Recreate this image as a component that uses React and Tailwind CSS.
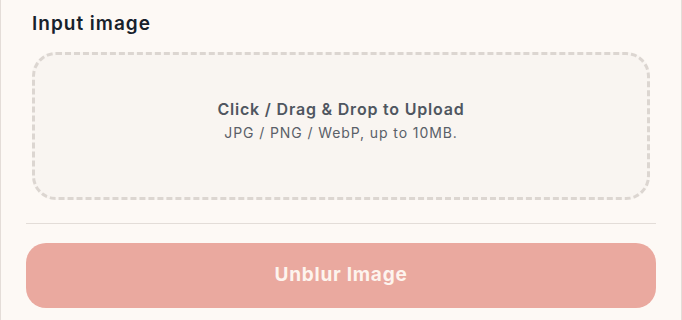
export default function App() {
  return (
    <div
      className="min-h-screen w-full border-x border-[#e4ddd8] bg-[#fdf9f5]"
      style={{ fontFamily: "Inter, 'Noto Sans', sans-serif" }}
    >
      <div className="px-[25px] pt-[12px]">
        <div className="px-[6px]">
          <h2 className="text-[19px] font-semibold leading-[24px] tracking-[1px] text-[#17212b]">Input image</h2>
          <div className="mt-[16px] flex h-[148px] cursor-pointer flex-col items-center justify-center rounded-[24px] border-[3px] border-dashed border-[#dcd6d1] bg-[#f9f5f1] pb-[12px]">
            <p className="text-[16px] font-semibold leading-6 tracking-[0.8px] text-[#4f5660]">
              Click / Drag &amp; Drop to Upload
            </p>
            <p className="mt-[2px] text-[14px] leading-5 tracking-[0.9px] text-[#5a6068]">JPG / PNG / WebP, up to 10MB.</p>
          </div>
        </div>
        <div className="mt-[23px] h-px bg-[#e3ddd8]" />
        <button className="mt-[19px] h-[65px] w-full rounded-[20px] bg-[#eaa99f] text-[19px] font-bold tracking-[0.75px] text-[#fdf4ee]">
          Unblur Image
        </button>
      </div>
    </div>
  );
}
